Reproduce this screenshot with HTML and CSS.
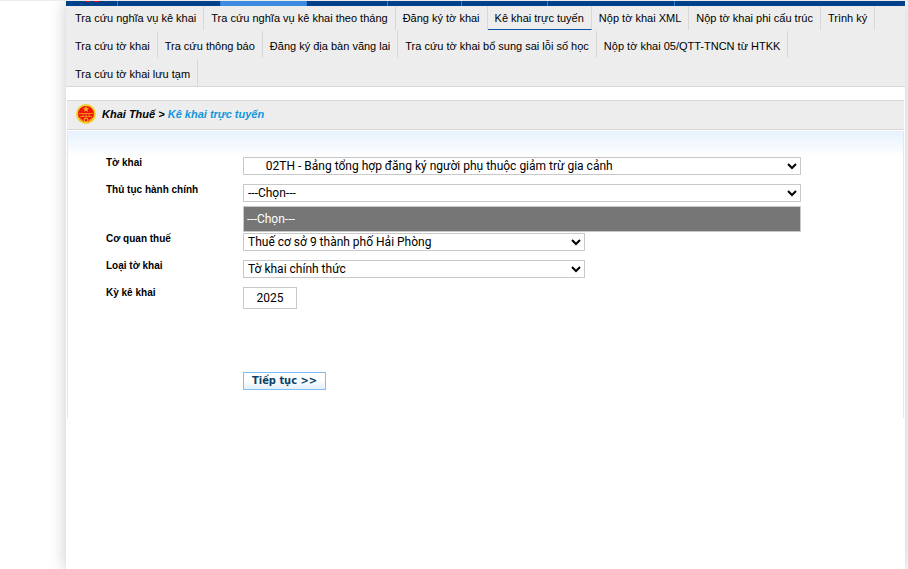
FILE: index.html
```html
<!DOCTYPE html>
<html lang="vi">
<head>
    <meta charset="UTF-8">
    <meta name="viewport" content="width=device-width, initial-scale=1.0">
    <title>Kê khai trực tuyến</title>
    <link rel="stylesheet" href="styles.css">
</head>
<body>
    <div class="page">
        <div class="topbar">
            <span class="tab tab-home"></span>
            <span class="tab tab-wide"></span>
            <span class="tab tab-current"></span>
            <span class="tab tab-medium"></span>
            <span class="tab tab-small"></span>
            <span class="tab tab-regular"></span>
            <span class="tab tab-large"></span>
        </div>
        <nav class="submenu">
            <a href="#">Tra cứu nghĩa vụ kê khai</a>
            <a href="#">Tra cứu nghĩa vụ kê khai theo tháng</a>
            <a href="#">Đăng ký tờ khai</a>
            <a href="#" class="active">Kê khai trực tuyến</a>
            <a href="#">Nộp tờ khai XML</a>
            <a href="#">Nộp tờ khai phi cấu trúc</a>
            <a href="#">Trình ký</a>
            <a href="#">Tra cứu tờ khai</a>
            <a href="#">Tra cứu thông báo</a>
            <a href="#">Đăng ký địa bàn vãng lai</a>
            <a href="#">Tra cứu tờ khai bổ sung sai lỗi số học</a>
            <a href="#">Nộp tờ khai 05/QTT-TNCN từ HTKK</a>
            <a href="#">Tra cứu tờ khai lưu tạm</a>
        </nav>

        <div class="content">
            <div class="breadcrumb">
                <svg class="emblem" viewBox="0 0 20 20" width="20" height="20">
                    <circle cx="10" cy="10" r="9" fill="#ee1409" stroke="#f3cf2a" stroke-width="2"/>
                    <path d="M10 2l1 2 2 .3-1.500 1.400.4 2-1.900-1-1.900 1 .4-2L7 4.300 9 4z" fill="#f9a423"/>
                    <path d="M3 9.500h14M4 12.500h12M7 9.500v3M10 9v4M13 9.500v3" stroke="#f0851c" fill="none"/>
                    <path d="M3 14q3 1 4 4M17 14q-3 1-4 4" stroke="#f3cf2a" fill="none"/>
                    <circle cx="10" cy="16" r="2" fill="#ee1409" stroke="#f3cf2a"/>
                </svg>
                <span>Khai Thuế &gt; <a href="#">Kê khai trực tuyến</a></span>
            </div>

            <form class="declare-form">
                <div class="row">
                    <label for="form-type">Tờ khai</label>
                    <select id="form-type">
                        <option>&nbsp;&nbsp;&nbsp;&nbsp;&nbsp;&nbsp;02TH - Bảng tổng hợp đăng ký người phụ thuộc giảm trừ gia cảnh</option>
                    </select>
                </div>
                <div class="row">
                    <label for="procedure">Thủ tục hành chính</label>
                    <div class="dropdown">
                        <select id="procedure">
                            <option>---Chọn---</option>
                        </select>
                        <ul class="options" role="listbox" aria-label="Thủ tục hành chính">
                            <li role="option" aria-selected="true">---Chọn---</li>
                        </ul>
                    </div>
                </div>
                <div class="row">
                    <label for="office">Cơ quan thuế</label>
                    <select id="office" class="short">
                        <option>Thuế cơ sở 9 thành phố Hải Phòng</option>
                    </select>
                </div>
                <div class="row">
                    <label for="kind">Loại tờ khai</label>
                    <select id="kind" class="short">
                        <option>Tờ khai chính thức</option>
                    </select>
                </div>
                <div class="row">
                    <label for="period">Kỳ kê khai</label>
                    <input type="text" id="period" value="2025">
                </div>
                <div class="row actions">
                    <button type="submit">Tiếp tục &gt;&gt;</button>
                </div>
            </form>
        </div>
    </div>
</body>
</html>
```

FILE: styles.css
```css
* {
    box-sizing: border-box;
}
body {
    margin: 0;
    border-top: 1px solid #ebebeb;
    background-color: #ffffff;
    font-family: "Liberation Sans", Arial, sans-serif;
    font-size: 11px;
    color: #000000;
    overflow: hidden;
}
.page {
    min-height: 100vh;
    margin: 0 3px 0 66px;
    background-color: #ffffff;
    box-shadow: 0 0 16px rgba(0, 0, 0, 0.22);
}

/* blue main menu */
.topbar {
    position: relative;
    display: flex;
    height: 5px;
    background-color: #004189;
}
.tab {
    border-right: 1px solid #2f7fd6;
}
.tab-home {
    width: 52px;
    background: linear-gradient(90deg, transparent 20px, #e0101a 20px, #e0101a 24px, transparent 24px, transparent 28px, #e0101a 28px, #e0101a 33px, transparent 33px) no-repeat;
    background-size: 100% 1px;
}
.tab-wide {
    width: 103px;
}
.tab-current {
    width: 86px;
    background-color: #3d8ae0;
}
.tab-medium {
    width: 81px;
}
.tab-small {
    width: 74px;
}
.tab-regular {
    width: 86px;
}
.tab-large {
    width: 127px;
}

/* grey sub menu, first row is tucked under the main menu */
.submenu {
    display: flex;
    flex-wrap: wrap;
    row-gap: 1px;
    margin-top: -3px;
    padding-left: 2px;
    background-color: #ededed;
    border-bottom: 1px solid #d8d8d8;
}
.submenu a {
    height: 27px;
    padding: 2px 7px 0;
    border-right: 1px solid #d8d8d8;
    line-height: 27px;
    color: #000000;
    text-decoration: none;
}
.submenu .active {
    border-bottom: 1px solid #0b55a8;
}

.content {
    margin: 13px 1px 0;
}
.breadcrumb {
    display: flex;
    align-items: center;
    gap: 6px;
    height: 30px;
    padding: 0 0 2px 9px;
    background-color: #ededed;
    border-top: 1px solid #d8d8d8;
    border-bottom: 1px solid #d8d8d8;
    font-weight: bold;
    font-style: italic;
}
.breadcrumb a {
    color: #1097dc;
    text-decoration: none;
}

.declare-form {
    display: flex;
    flex-direction: column;
    gap: 9px;
    min-height: 287px;
    margin-top: 1px;
    padding: 26px 102px 27px 38px;
    border-left: 1px solid #dbe9f6;
    border-right: 1px solid #dbe9f6;
    background: linear-gradient(#e6f2fd, #ffffff) no-repeat;
    background-size: 100% 26px;
}
.row {
    display: grid;
    grid-template-columns: 137px 1fr;
    align-items: start;
}
.row label {
    font-size: 10px;
    font-weight: bold;
    line-height: 12px;
}
select,
input {
    border: 1px solid #c8c8c8;
    border-radius: 0;
    background-color: #ffffff;
    font-family: Tahoma, Roboto, sans-serif;
    font-size: 12px;
    color: #000000;
}
select {
    width: 100%;
    height: 18px;
    padding: 0;
}
.short {
    max-width: 342px;
}
input {
    width: 54px;
    height: 22px;
    padding: 0;
    text-align: center;
}
.dropdown {
    display: flex;
    flex-direction: column;
    gap: 4px;
    margin-bottom: -8px;
}
.options {
    margin: 0;
    padding: 0;
    border: 1px solid #c8c8c8;
    background-color: #767676;
    list-style: none;
    font-family: Tahoma, Roboto, sans-serif;
    font-size: 12px;
    line-height: 24px;
    color: #ffffff;
}
.options li {
    padding: 0 3px;
}
.actions {
    margin-top: 54px;
}
button {
    grid-column: 2;
    justify-self: start;
    height: 18px;
    padding: 0 8px;
    border: 1px solid #7fbdf5;
    background: linear-gradient(#ffffff 40%, #e3f0fb);
    font-family: Tahoma, "DejaVu Sans Condensed", "DejaVu Sans", sans-serif;
    font-size: 11px;
    font-weight: bold;
    line-height: 14px;
    color: #0a4163;
}
```
